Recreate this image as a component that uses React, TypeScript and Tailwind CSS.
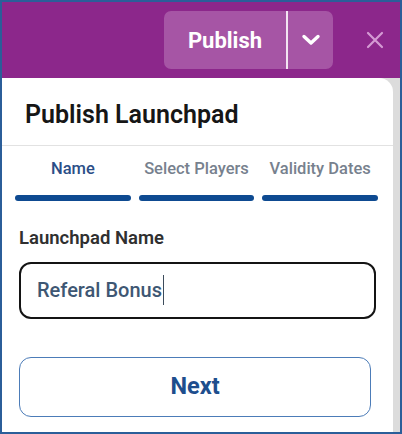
import React from "react";

export default function App() {
  return (
    <div
      className="w-[402px] h-[434px] border-2 border-[#2b5e99] flex flex-col overflow-hidden"
      style={{ fontFamily: "Roboto, 'Noto Sans', sans-serif" }}
    >
      <div className="h-[76px] shrink-0 bg-[#8c278b] flex items-center justify-end pr-[16px]">
        <div className="flex h-[58px] w-[169px] rounded-[7px] bg-[#a655a5] mr-[33px]">
          <div className="w-[122px] flex items-center justify-center text-white font-bold text-[22px]">
            Publish
          </div>
          <div className="w-[2px] bg-[#f3e4f2]" />
          <div className="flex-1 flex items-center justify-center">
            <svg width="20" height="12" viewBox="0 0 20 12" fill="none">
              <path d="M3 2.5 L10 9 L17 2.5" stroke="white" strokeWidth="3.4" strokeLinecap="round" strokeLinejoin="round" />
            </svg>
          </div>
        </div>
        <svg width="18" height="18" viewBox="0 0 18 18" fill="none">
          <path d="M2 2 L16 16 M16 2 L2 16" stroke="#d49ad3" strokeWidth="2.2" strokeLinecap="round" />
        </svg>
      </div>
      <div className="flex-1 flex bg-[#dcdcdc]">
        <div className="flex-1 bg-white rounded-tr-[14px] flex flex-col">
          <div className="h-[68px] flex items-center pl-[23px] pt-[5px] border-b border-[#e2e2e2]">
            <span className="text-[25px] font-semibold text-[#161616] leading-none">Publish Launchpad</span>
          </div>
          <div className="grid grid-cols-3 gap-x-[8px] pl-[13px] pr-[15px] pt-[11px]">
            <div className="text-center text-[16.5px] font-medium text-[#2b4e87]">Name</div>
            <div className="text-center text-[16.5px] font-medium text-[#77818e]">Select Players</div>
            <div className="text-center text-[16.5px] font-medium text-[#77818e]">Validity Dates</div>
            <div className="h-[6px] rounded-full bg-[#0e4a91] mt-[13px]" />
            <div className="h-[6px] rounded-full bg-[#0e4a91] mt-[13px]" />
            <div className="h-[6px] rounded-full bg-[#0e4a91] mt-[13px]" />
          </div>
          <div className="px-[17px] pt-[25px]">
            <div className="text-[18.5px] font-semibold text-[#303030] leading-[24px]">Launchpad Name</div>
            <div className="mt-[12px] h-[57px] w-[357px] rounded-[12px] border-[2.5px] border-[#141414] flex items-center pl-[16px]">
              <span className="text-[20px] font-medium text-[#3e5773]">Referal Bonus</span>
              <span className="w-[1.5px] h-[30px] bg-[#3d4c5c] ml-[1px]" />
            </div>
            <button className="mt-[38px] h-[60px] w-[352px] rounded-[12px] border-[1.5px] border-[#4c7cb8] flex items-center justify-center text-[23.5px] font-bold text-[#1e4e8d]">
              Next
            </button>
          </div>
        </div>
        <div className="w-[10px]" />
      </div>
    </div>
  );
}
